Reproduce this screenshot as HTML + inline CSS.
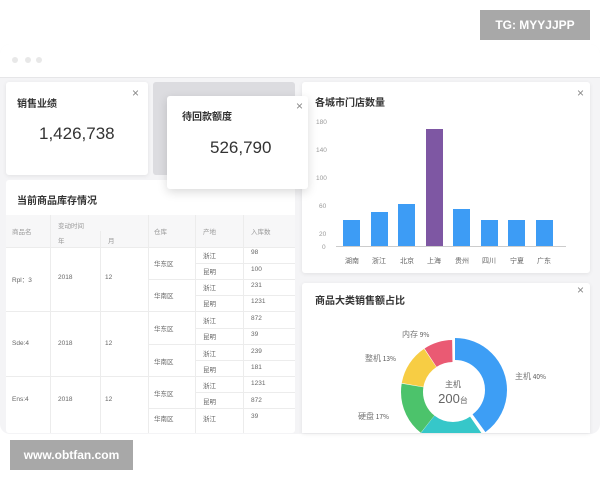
<!DOCTYPE html>
<html><head><meta charset="utf-8"><style>
*{margin:0;padding:0;box-sizing:border-box}
body{width:600px;height:480px;overflow:hidden;background:#fff;font-family:"Liberation Sans","Noto Sans CJK SC",sans-serif;position:relative;color:#333}
.abs{position:absolute}
.card{position:absolute;background:#fff;border-radius:3px;box-shadow:0 1px 4px rgba(0,0,0,.08)}
.t{position:absolute;font-size:10px;font-weight:bold;color:#333}
.x{position:absolute;font-size:12px;color:#888;line-height:12px}
.c{position:absolute;font-size:6.5px;color:#666;white-space:nowrap}
.h{color:#999}
.ln{position:absolute;background:#ececec}
</style></head><body>
<div class="abs" style="left:0;top:44px;width:600px;height:390px;background:#f4f4f6;border-radius:10px 10px 10px 10px"></div>
<div class="abs" style="left:0;top:44px;width:600px;height:34px;background:#fff;border-radius:10px 10px 0 0;border-bottom:1px solid #e6e6e8"></div>
<div class="abs" style="left:12px;top:57px;width:6px;height:6px;border-radius:3px;background:#e8e8e8"></div>
<div class="abs" style="left:25px;top:57px;width:6px;height:6px;border-radius:3px;background:#e8e8e8"></div>
<div class="abs" style="left:36px;top:57px;width:6px;height:6px;border-radius:3px;background:#e8e8e8"></div>

<div class="card" style="left:6px;top:82px;width:142px;height:93px">
<div class="t" style="left:11px;top:13px">销售业绩</div><div class="x" style="left:126px;top:5px">×</div>
<div class="abs" style="left:33px;top:42px;font-size:17px;color:#333">1,426,738</div></div>
<div class="abs" style="left:153px;top:82px;width:142px;height:93px;background:#dcdce0;border-radius:3px"></div>

<div class="card" style="left:6px;top:180px;width:289px;height:253px;box-shadow:none">
<div class="t" style="left:11px;top:12px">当前商品库存情况</div>
<div class="abs" style="left:0;top:35px;width:289px;height:32px;background:#f7f7f8"></div>
<div class="c h" style="left:6px;top:46px">商品名</div><div class="c h" style="left:52px;top:40px">变动时间</div>
<div class="c h" style="left:52px;top:55px">年</div><div class="c h" style="left:102px;top:55px">月</div>
<div class="c h" style="left:148px;top:46px">仓库</div><div class="c h" style="left:197px;top:46px">产地</div><div class="c h" style="left:245px;top:46px">入库数</div>
<div class="ln" style="left:44px;top:35px;width:1px;height:218px"></div>
<div class="ln" style="left:94px;top:51px;width:1px;height:202px"></div>
<div class="ln" style="left:142px;top:35px;width:1px;height:218px"></div>
<div class="ln" style="left:189px;top:35px;width:1px;height:218px"></div>
<div class="ln" style="left:237px;top:35px;width:1px;height:218px"></div>
<div class="ln" style="left:0;top:67px;width:289px;height:1px"></div>
<div class="ln" style="left:0;top:131px;width:289px;height:1px"></div>
<div class="ln" style="left:0;top:196px;width:289px;height:1px"></div>
<div class="ln" style="left:142px;top:99px;width:147px;height:1px"></div>
<div class="ln" style="left:142px;top:164px;width:147px;height:1px"></div>
<div class="ln" style="left:142px;top:228px;width:147px;height:1px"></div>
<div class="ln" style="left:189px;top:83px;width:100px;height:1px"></div>
<div class="ln" style="left:189px;top:115px;width:100px;height:1px"></div>
<div class="ln" style="left:189px;top:148px;width:100px;height:1px"></div>
<div class="ln" style="left:189px;top:180px;width:100px;height:1px"></div>
<div class="ln" style="left:189px;top:212px;width:100px;height:1px"></div>
<div class="c" style="left:6px;top:94px">Rpl：3</div><div class="c" style="left:52px;top:94px">2018</div><div class="c" style="left:99px;top:94px">12</div>
<div class="c" style="left:6px;top:160px">Sde:4</div><div class="c" style="left:52px;top:160px">2018</div><div class="c" style="left:99px;top:160px">12</div>
<div class="c" style="left:6px;top:216px">Ens:4</div><div class="c" style="left:52px;top:216px">2018</div><div class="c" style="left:99px;top:216px">12</div>
<div class="c" style="left:148px;top:78px">华东区</div><div class="c" style="left:148px;top:110px">华南区</div>
<div class="c" style="left:148px;top:143px">华东区</div><div class="c" style="left:148px;top:176px">华南区</div>
<div class="c" style="left:148px;top:208px">华东区</div><div class="c" style="left:148px;top:233px">华南区</div>
<div class="c" style="left:197px;top:70px">浙江</div><div class="c" style="left:197px;top:86px">昆明</div>
<div class="c" style="left:197px;top:102px">浙江</div><div class="c" style="left:197px;top:118px">昆明</div>
<div class="c" style="left:197px;top:135px">浙江</div><div class="c" style="left:197px;top:151px">昆明</div>
<div class="c" style="left:197px;top:168px">浙江</div><div class="c" style="left:197px;top:184px">昆明</div>
<div class="c" style="left:197px;top:200px">浙江</div><div class="c" style="left:197px;top:216px">昆明</div>
<div class="c" style="left:197px;top:233px">浙江</div>
<div class="c" style="left:245px;top:69px">98</div><div class="c" style="left:245px;top:86px">100</div>
<div class="c" style="left:245px;top:102px">231</div><div class="c" style="left:245px;top:118px">1231</div>
<div class="c" style="left:245px;top:135px">872</div><div class="c" style="left:245px;top:151px">39</div>
<div class="c" style="left:245px;top:168px">239</div><div class="c" style="left:245px;top:184px">181</div>
<div class="c" style="left:245px;top:200px">1231</div><div class="c" style="left:245px;top:217px">872</div>
<div class="c" style="left:245px;top:233px">39</div>
</div>

<div class="card" style="left:302px;top:82px;width:288px;height:191px">
<div class="t" style="left:13px;top:12px">各城市门店数量</div><div class="x" style="left:275px;top:5px">×</div>
<svg class="abs" style="left:0;top:0" width="288" height="191">
<g font-size="6.5" fill="#999" font-family="Liberation Sans">
<text x="14" y="42">180</text><text x="14" y="70">140</text><text x="14" y="98">100</text><text x="17" y="126">60</text><text x="17" y="154">20</text><text x="20" y="167">0</text></g>
<line x1="34" y1="164.5" x2="264" y2="164.5" stroke="#ccc"/>
<g fill="#3d9cf5"><rect x="41" y="138" width="17" height="26"/><rect x="69" y="130" width="17" height="34"/><rect x="96" y="122" width="17" height="42"/><rect x="151" y="127" width="17" height="37"/><rect x="179" y="138" width="17" height="26"/><rect x="206" y="138" width="17" height="26"/><rect x="234" y="138" width="17" height="26"/></g>
<rect x="124" y="47" width="17" height="117" fill="#7e57a3"/>
<g font-size="7" fill="#666" font-family="Noto Sans CJK SC"><text x="43" y="181">湖南</text><text x="70" y="181">浙江</text><text x="98" y="181">北京</text><text x="125" y="181">上海</text><text x="153" y="181">贵州</text><text x="180" y="181">四川</text><text x="208" y="181">宁夏</text><text x="235" y="181">广东</text></g>
</svg></div>

<div class="card" style="left:167px;top:96px;width:141px;height:93px;box-shadow:0 3px 10px rgba(0,0,0,.15)">
<div class="t" style="left:15px;top:12px">待回款额度</div><div class="x" style="left:129px;top:4px">×</div>
<div class="abs" style="left:43px;top:42px;font-size:17px;color:#333">526,790</div></div>

<div class="card" style="left:302px;top:283px;width:288px;height:150px;border-radius:3px 3px 0 0">
<div class="t" style="left:13px;top:9px">商品大类销售额占比</div><div class="x" style="left:275px;top:1px">×</div>
<svg class="abs" style="left:0;top:0" width="288" height="150">
<g transform="translate(151,109) rotate(-90)" fill="none" stroke-width="22">
<circle r="41" stroke="#3d9ef5" stroke-dasharray="103 500" transform="translate(2,2)"/>
<circle r="41" stroke="#36c7c9" stroke-dasharray="0 103.8 52 500"/>
<circle r="41" stroke="#4cc36b" stroke-dasharray="0 156 43.5 500"/>
<circle r="41" stroke="#f7cd44" stroke-dasharray="0 200 33 500"/>
<circle r="41" stroke="#ea5a73" stroke-dasharray="0 233.5 23 500"/>
</g>
<text x="151" y="104" font-size="8" fill="#666" text-anchor="middle" font-family="Noto Sans CJK SC">主机</text>
<text x="151" y="120" font-size="13" fill="#666" text-anchor="middle">200<tspan font-size="8">台</tspan></text>
<g font-size="8" fill="#777" font-family="Noto Sans CJK SC"><text x="100" y="54">内存 <tspan fill="#555" font-size="6.5">9%</tspan></text><text x="63" y="78">整机 <tspan fill="#555" font-size="6.5">13%</tspan></text><text x="56" y="136">硬盘 <tspan fill="#555" font-size="6.5">17%</tspan></text><text x="213" y="96">主机 <tspan fill="#555" font-size="6.5">40%</tspan></text></g>
</svg></div>

<div class="abs" style="left:480px;top:10px;width:110px;height:30px;background:#a8a8a8;color:#fff;font-size:12px;font-weight:bold;line-height:30px;text-align:center">TG: MYYJJPP</div>
<div class="abs" style="left:10px;top:440px;width:123px;height:30px;background:#a8a8a8;color:#fff;font-size:12px;font-weight:bold;line-height:30px;text-align:center">www.obtfan.com</div>
</body></html>
